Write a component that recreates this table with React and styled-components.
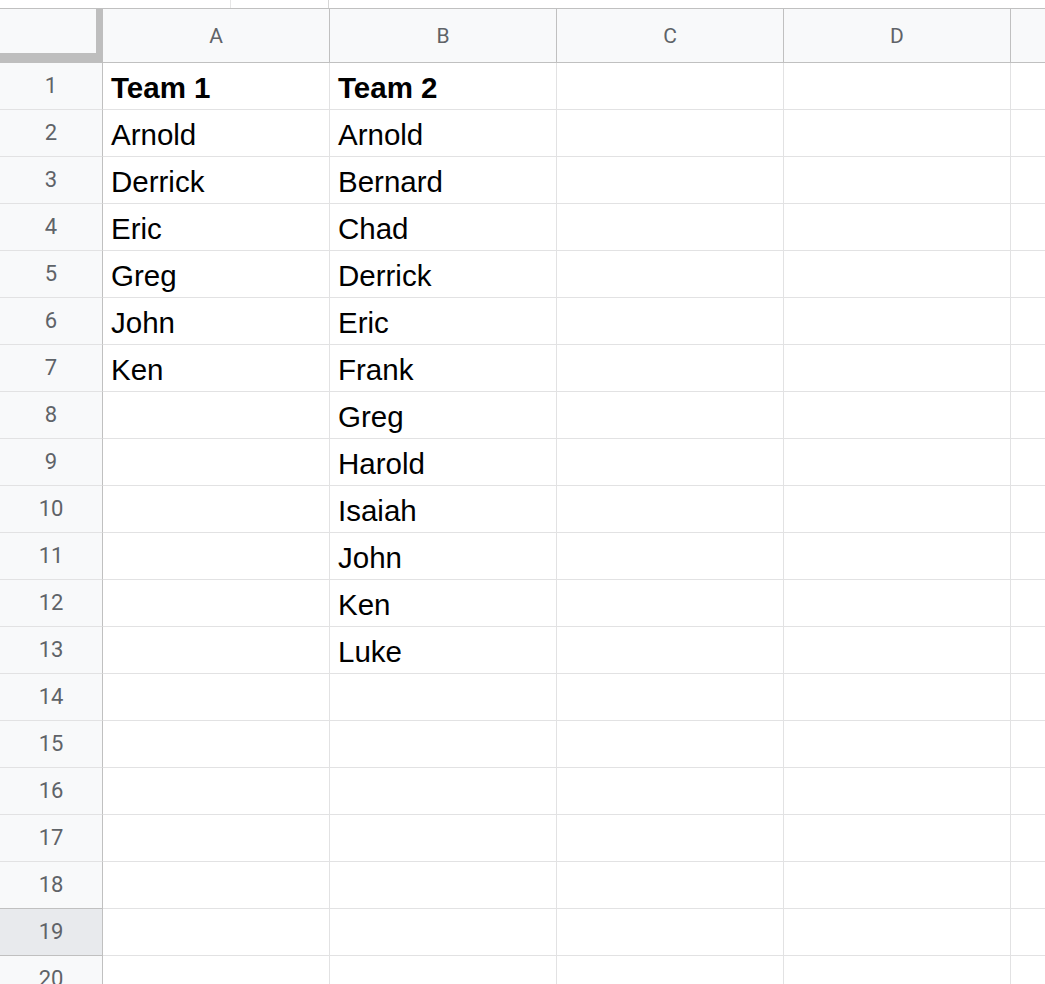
import React from "react";
import styled, { createGlobalStyle } from "styled-components";

const Global = createGlobalStyle`
  html, body { margin: 0; padding: 0; background: #ffffff; overflow: hidden; }
  * { box-sizing: border-box; }
`;

const Page = styled.div`
  width: 1045px;
  height: 984px;
  overflow: hidden;
  background: #ffffff;
  display: flex;
  flex-direction: column;
`;

const TopStrip = styled.div`
  flex: none;
  display: flex;
  border-bottom: 1px solid #c0c0c0;
  height: 9px;
`;

const StripSpacer = styled.div`
  width: ${(p) => p.$w}px;
  flex: none;
  border-right: ${(p) => (p.$line ? `1px solid ${p.$line}` : "none")};
`;

const Sheet = styled.div`
  display: grid;
  grid-template-columns: 103px repeat(5, 227px);
  grid-auto-rows: 47px;
  grid-template-rows: 54px;
`;

const Corner = styled.div`
  background: #f8f9fa;
  border-right: 7px solid #bebebe;
  border-bottom: 10px solid #bebebe;
`;

const ColHead = styled.div`
  background: #f8f9fa;
  border-right: 1px solid #c0c0c0;
  border-bottom: 1px solid #c0c0c0;
  display: flex;
  align-items: center;
  justify-content: center;
  font-family: Roboto, "Liberation Sans", sans-serif;
  font-size: 21px;
  color: #5f6368;
`;

const RowHead = styled.div`
  position: relative;
  background: ${(p) => (p.$selected ? "#e8eaed" : "#f8f9fa")};
  border-right: 1px solid #c0c0c0;
  border-bottom: 1px solid ${(p) => (p.$selected ? "#c0c0c0" : "#e2e2e3")};
  box-shadow: ${(p) => (p.$selected ? "0 -1px 0 #c0c0c0" : "none")};
  display: flex;
  align-items: center;
  justify-content: center;
  padding-bottom: 1px;
  font-family: Roboto, "Liberation Sans", sans-serif;
  font-size: 22px;
  color: #5f6368;
`;

const Cell = styled.div`
  border-right: 1px solid #e2e2e3;
  border-bottom: 1px solid #e2e2e3;
  display: flex;
  align-items: center;
  padding-left: 8px;
  padding-top: 3px;
  font-family: "Liberation Sans", Arial, sans-serif;
  font-size: 29.5px;
  line-height: 1;
  font-weight: ${(p) => (p.$bold ? 700 : 400)};
  color: #000000;
  white-space: nowrap;
  overflow: hidden;
`;

const colA = ["Team 1", "Arnold", "Derrick", "Eric", "Greg", "John", "Ken"];
const colB = [
  "Team 2",
  "Arnold",
  "Bernard",
  "Chad",
  "Derrick",
  "Eric",
  "Frank",
  "Greg",
  "Harold",
  "Isaiah",
  "John",
  "Ken",
  "Luke",
];

const columns = ["A", "B", "C", "D", "E"];
const rows = Array.from({ length: 20 }, (_, i) => i + 1);

export default function App() {
  return (
    <Page>
      <Global />
      <TopStrip>
        <StripSpacer $w={231} $line="#e6e6e6" />
        <StripSpacer $w={98} $line="#d6d6d6" />
      </TopStrip>
      <Sheet>
        <Corner />
        {columns.map((c) => (
          <ColHead key={c}>{c === "E" ? "" : c}</ColHead>
        ))}
        {rows.map((r) => (
          <React.Fragment key={r}>
            <RowHead $selected={r === 19}>{r}</RowHead>
            <Cell $bold={r === 1}>{colA[r - 1] || ""}</Cell>
            <Cell $bold={r === 1}>{colB[r - 1] || ""}</Cell>
            <Cell />
            <Cell />
            <Cell />
          </React.Fragment>
        ))}
      </Sheet>
    </Page>
  );
}
